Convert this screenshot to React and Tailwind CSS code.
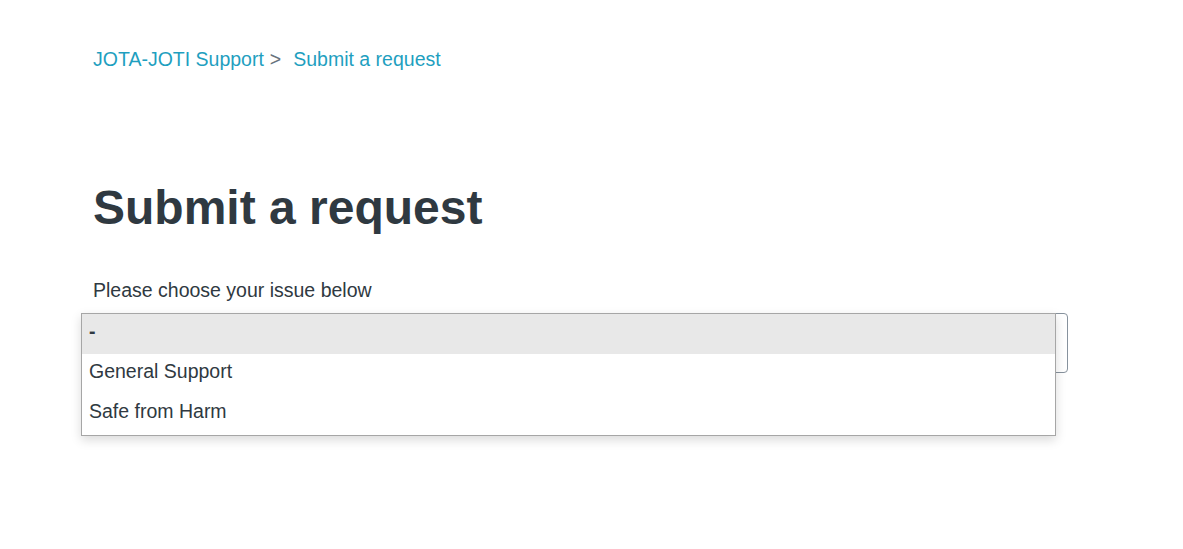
export default function App() {
  const font = { fontFamily: '"Liberation Sans", Arial, sans-serif' };
  return (
    <div className="w-[1183px] h-[549px] bg-white overflow-hidden" style={font}>
      <div className="pl-[93px] pr-[115px] pt-[45px] flex flex-col">
        <nav className="flex items-center text-[19.5px] leading-[29px]">
          <span className="text-[#1f9fbf]">JOTA-JOTI Support</span>
          <span className="text-[#68737d] ml-[6px] mr-[12px]">&gt;</span>
          <span className="text-[#1f9fbf]">Submit a request</span>
        </nav>
        <h1 className="mt-[104px] text-[48px] leading-[60px] font-bold text-[#2f3941]">Submit a request</h1>
        <label className="mt-[38px] text-[19.5px] leading-[29px] text-[#2f3941]">Please choose your issue below</label>
        <div className="relative mt-[8px] w-[975px]">
          <div className="h-[60px] border border-[#87929d] rounded-[4px] bg-white"></div>
          <div className="absolute left-[-12px] top-0 w-[975px] bg-white border border-[#a6a6a6] shadow-[0_4px_10px_rgba(0,0,0,0.15)] text-[19.5px] text-[#2f3941]">
            <div className="h-[40px] bg-[#e8e8e8] pl-[7px] pb-[5px] flex items-center font-bold">-</div>
            <div className="h-[40px] pl-[7px] pb-[4px] flex items-center">General Support</div>
            <div className="h-[41px] pl-[7px] pb-[5px] flex items-center">Safe from Harm</div>
          </div>
        </div>
      </div>
    </div>
  );
}
